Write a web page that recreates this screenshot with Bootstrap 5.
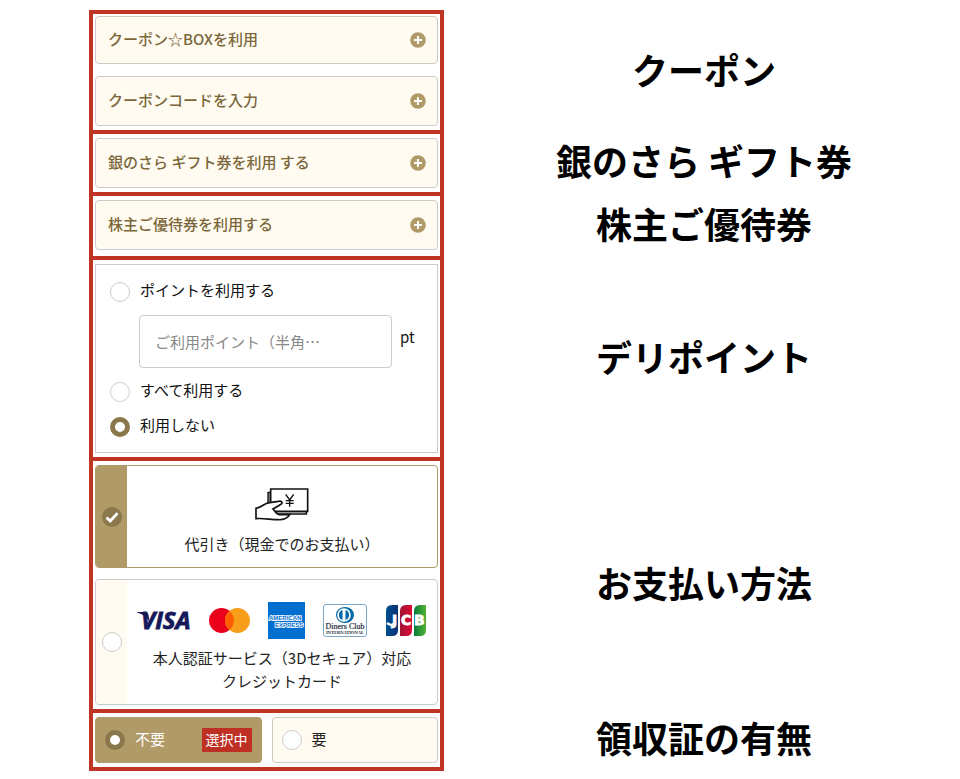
<!DOCTYPE html>
<html lang="ja">
<head>
<meta charset="utf-8">
<meta name="viewport" content="width=device-width, initial-scale=1">
<title>お支払い</title>
<link href="https://cdn.jsdelivr.net/npm/bootstrap@5.3.0/dist/css/bootstrap.min.css" rel="stylesheet">
<style>
  :root { --frame: #be3425; --gold: #b09a67; --gold-dark: #8a774b; --cream: #fffbf1; --line: #cccccc; }
  body { font-family: "Noto Sans CJK JP", sans-serif; font-size: 15px; line-height: 23px; color: #222; background: #fff; }
  .checkout { padding: 10px 0 8px 89px; }
  .step { display: grid; grid-template-columns: 355fr 516fr; }
  .step-body { border: 4px solid var(--frame); border-top-width: 0; padding: 4px 2px; }
  .step:first-child .step-body { border-top-width: 4px; padding-top: 2px; }
  .step-body-roomy { padding-bottom: 6px; }
  .step-title { font-size: 36px; line-height: 46px; font-weight: 700; color: #000; padding-bottom: 10px; }
  .step:first-child .step-title { padding-bottom: 6px; }
  .stack { gap: 12px; }
  .opener { min-height: 50px; padding: 0 11px 0 12px; border: 1px solid var(--line); border-radius: 4px; background: var(--cream); color: #7b673a; font-weight: 500; }
  .opener span, .panel label, .receipt span { padding-bottom: 4px; }
  .opener-short { min-height: 48px; }
  .panel { border: 1px solid var(--line); padding: 15px 14px 14px; }
  .panel label { color: #111; }
  .choice { height: 23px; gap: 10px; }
  .pick.form-check-input { width: 20px; height: 20px; margin: 0; flex: none; border: 1px solid var(--line); background: #fff; }
  .pick.form-check-input:checked { border: 5px solid var(--gold-dark); background: #fff; }
  .points { margin-left: 29px; gap: 8px; }
  .points .form-control { width: 253px; height: 53px; padding: 0 15px; border: 1px solid var(--line); border-radius: 4px; font-size: 15px; }
  .points .form-control::placeholder { color: #888; }
  .points label { padding-bottom: 10px; }
  .methods { gap: 11px; }
  .method { border: 1px solid var(--line); border-radius: 4px; overflow: hidden; cursor: pointer; color: #222; }
  .method-side { width: 31px; background: var(--cream); }
  .method-main { padding: 22px 8px 12px; }
  .method.method-on { border-color: var(--gold); }
  .method-on .method-side { background: var(--gold); }
  .method-side .pick.form-check-input:checked { border: 0; background: var(--gold-dark) url("data:image/svg+xml,%3Csvg xmlns='http://www.w3.org/2000/svg' viewBox='0 0 20 20'%3E%3Cpath d='M4.500 10.500 8.200 14 15.500 6.300' fill='none' stroke='%23fff' stroke-width='2.800'/%3E%3C/svg%3E") center / 20px; }
  .cash { margin-bottom: 11px; }
  .brands { gap: 18px; margin-bottom: 7px; padding-right: 2px; }
  .receipts { display: grid; grid-template-columns: 1fr 1fr; gap: 10px; }
  .receipt { min-height: 46px; padding: 0 9px; gap: 10px; border: 1px solid var(--line); border-radius: 4px; background: var(--cream); cursor: pointer; }
  .receipt-on { background: var(--gold); border-color: var(--gold); color: #fff; }
  .receipt .chosen { background: #be3023; font-size: 14px; line-height: 22px; padding: 0 4px 2px; border-radius: 1px; }
</style>
</head>
<body>
<svg class="d-none" aria-hidden="true">
  <symbol id="plus" viewBox="0 0 16 16"><circle cx="8" cy="8" r="7.8" fill="#b09a67"/><path d="M8 4v8M4 8h8" stroke="#fff" stroke-width="2"/></symbol>
</svg>
<main class="checkout">
  <section class="step">
    <div class="step-body d-flex flex-column stack">
      <button type="button" class="opener opener-short w-100 d-flex align-items-center justify-content-between"><span>クーポン☆BOXを利用</span><svg width="16" height="16" aria-hidden="true"><use href="#plus"/></svg></button>
      <button type="button" class="opener w-100 d-flex align-items-center justify-content-between"><span>クーポンコードを入力</span><svg width="16" height="16" aria-hidden="true"><use href="#plus"/></svg></button>
    </div>
    <div class="d-flex align-items-center justify-content-center ps-1"><h2 class="step-title mb-0">クーポン</h2></div>
  </section>
  <section class="step">
    <div class="step-body">
      <button type="button" class="opener w-100 d-flex align-items-center justify-content-between"><span>銀のさら ギフト券を利用 する</span><svg width="16" height="16" aria-hidden="true"><use href="#plus"/></svg></button>
    </div>
    <div class="d-flex align-items-center justify-content-center ps-1"><h2 class="step-title mb-0">銀のさら ギフト券</h2></div>
  </section>
  <section class="step">
    <div class="step-body step-body-roomy">
      <button type="button" class="opener w-100 d-flex align-items-center justify-content-between"><span>株主ご優待券を利用する</span><svg width="16" height="16" aria-hidden="true"><use href="#plus"/></svg></button>
    </div>
    <div class="d-flex align-items-center justify-content-center ps-1"><h2 class="step-title mb-0">株主ご優待券</h2></div>
  </section>
  <section class="step">
    <div class="step-body">
      <div class="panel d-flex flex-column stack">
        <div class="choice d-flex align-items-center"><input class="form-check-input pick" type="radio" name="point" id="point-some"><label for="point-some">ポイントを利用する</label></div>
        <div class="points d-flex align-items-center">
          <input class="form-control" type="text" id="point-amount" placeholder="ご利用ポイント（半角…">
          <label for="point-amount">pt</label>
        </div>
        <div class="choice d-flex align-items-center"><input class="form-check-input pick" type="radio" name="point" id="point-all"><label for="point-all">すべて利用する</label></div>
        <div class="choice d-flex align-items-center"><input class="form-check-input pick" type="radio" name="point" id="point-none" checked><label for="point-none">利用しない</label></div>
      </div>
    </div>
    <div class="d-flex align-items-center justify-content-center ps-1"><h2 class="step-title mb-0">デリポイント</h2></div>
  </section>
  <section class="step">
    <div class="step-body methods d-flex flex-column">
      <label class="method method-on d-flex" for="pay-cash">
        <span class="method-side d-flex align-items-center justify-content-center flex-shrink-0"><input class="form-check-input pick" type="radio" name="pay" id="pay-cash" checked></span>
        <span class="method-main d-flex flex-column align-items-center text-center flex-grow-1">
          <svg class="cash" width="54" height="33" viewBox="47 40 162 99" fill="#fff" stroke="#111" stroke-width="5" aria-hidden="true">
            <path d="M86 53h9v44h-9z" fill="#888" stroke-width="4"/>
            <path d="M100 110h101v8h-95z"/>
            <path d="M94 43h111v67H94z"/>
            <path d="M139 59l12 17 12-17M151 76v20M139 78h24M139 86h24" fill="none" stroke-width="4"/>
            <path d="M50 101c18-2 22-15 41-17l26-4c10-2 15 4 8 9l-24 14 10 12 8 5h32c-7 13-19 16-36 15-20 0-44-5-65-3z"/>
          </svg>
          <span>代引き（現金でのお支払い）</span>
        </span>
      </label>
      <label class="method d-flex" for="pay-card">
        <span class="method-side d-flex align-items-center justify-content-center flex-shrink-0"><input class="form-check-input pick" type="radio" name="pay" id="pay-card"></span>
        <span class="method-main d-flex flex-column align-items-center text-center flex-grow-1">
          <span class="brands d-flex align-items-center justify-content-center">
            <svg class="overflow-visible" width="54" height="36" viewBox="0 0 54 36" role="img" aria-label="VISA"><path d="M0 9h8q3 0 3.500 3l1 7Q9 12 0 9.500z" fill="#15195a"/><text x="4" y="26" font-family="Open Sans, sans-serif" font-size="24" font-weight="700" font-style="italic" fill="#15195a" stroke="#15195a" stroke-width=".8">VISA</text></svg>
            <svg width="41" height="25" viewBox="0 0 41 25" role="img" aria-label="Mastercard"><circle cx="12.500" cy="12.500" r="12.500" fill="#eb001b"/><circle cx="28.500" cy="12.500" r="12.500" fill="#f79e1b"/><path d="M20.500 2.900a12.500 12.500 0 0 1 0 19.200 12.500 12.500 0 0 1 0-19.200z" fill="#ff5f00"/></svg>
            <svg width="37" height="37" viewBox="0 0 37 37" role="img" aria-label="American Express"><path d="M0 0h37v37H0z" fill="#016fd0"/><g font-family="Liberation Sans, sans-serif" font-size="6" font-weight="700" fill="#016fd0" stroke="#fff" stroke-width="1.600" paint-order="stroke"><text x="1" y="17.500">AMERICAN</text><text x="7" y="25">EXPRESS</text></g></svg>
            <svg width="45" height="33" viewBox="0 0 45 33" role="img" aria-label="Diners Club International"><rect x=".5" y=".5" width="43" height="32" rx="2.500" fill="#fff" stroke="#7ba6c8"/><ellipse cx="22" cy="11" rx="9" ry="8" fill="#0069aa"/><circle cx="21" cy="11" r="6.800" fill="#fff"/><path d="M19.500 6v10a5.300 5.300 0 0 1 0-10zM22.500 6v10a5.300 5.300 0 0 0 0-10z" fill="#0069aa"/><g font-family="Liberation Serif, serif" fill="#1c2940" text-anchor="middle"><text x="22" y="25" font-size="8" stroke="#1c2940" stroke-width=".2">Diners Club</text><text x="22" y="30" font-size="4.500" font-weight="700">INTERNATIONAL</text></g></svg>
            <svg width="40" height="31" viewBox="0 0 40 31" role="img" aria-label="JCB">
              <defs>
                <linearGradient id="jb"><stop offset="0" stop-color="#00508f"/><stop offset="1" stop-color="#0a2f78"/></linearGradient>
                <linearGradient id="jr"><stop offset="0" stop-color="#a11234"/><stop offset="1" stop-color="#de0b36"/></linearGradient>
                <linearGradient id="jg"><stop offset="0" stop-color="#087b3c"/><stop offset="1" stop-color="#52b333"/></linearGradient>
              </defs>
              <path d="M0 31V6q0-6 6-6h6v25q0 6-6 6z" fill="url(#jb)"/><path d="M14 31V6q0-6 6-6h6v25q0 6-6 6z" fill="url(#jr)"/><path d="M28 31V6q0-6 6-6h6v25q0 6-6 6z" fill="url(#jg)"/>
              <path d="M1 18q5 3.500 7 .5" fill="none" stroke="#fff" stroke-width="2.500"/>
              <g font-family="DejaVu Sans, sans-serif" font-size="14" font-weight="700" fill="#fff" stroke="#fff" stroke-width=".8"><text x="6" y="20">J</text><text x="15" y="20">C</text><text x="28" y="20">B</text></g>
            </svg>
          </span>
          <span>本人認証サービス（3Dセキュア）対応<br>クレジットカード</span>
        </span>
      </label>
    </div>
    <div class="d-flex align-items-center justify-content-center ps-1"><h2 class="step-title mb-0">お支払い方法</h2></div>
  </section>
  <section class="step">
    <div class="step-body">
      <div class="receipts">
        <label class="receipt receipt-on d-flex align-items-center" for="receipt-no"><input class="form-check-input pick" type="radio" name="receipt" id="receipt-no" checked><span>不要</span><span class="chosen ms-auto">選択中</span></label>
        <label class="receipt d-flex align-items-center" for="receipt-yes"><input class="form-check-input pick" type="radio" name="receipt" id="receipt-yes"><span>要</span></label>
      </div>
    </div>
    <div class="d-flex align-items-center justify-content-center ps-1"><h2 class="step-title mb-0">領収証の有無</h2></div>
  </section>
</main>
<script src="https://cdn.jsdelivr.net/npm/bootstrap@5.3.0/dist/js/bootstrap.bundle.min.js"></script>
</body>
</html>
